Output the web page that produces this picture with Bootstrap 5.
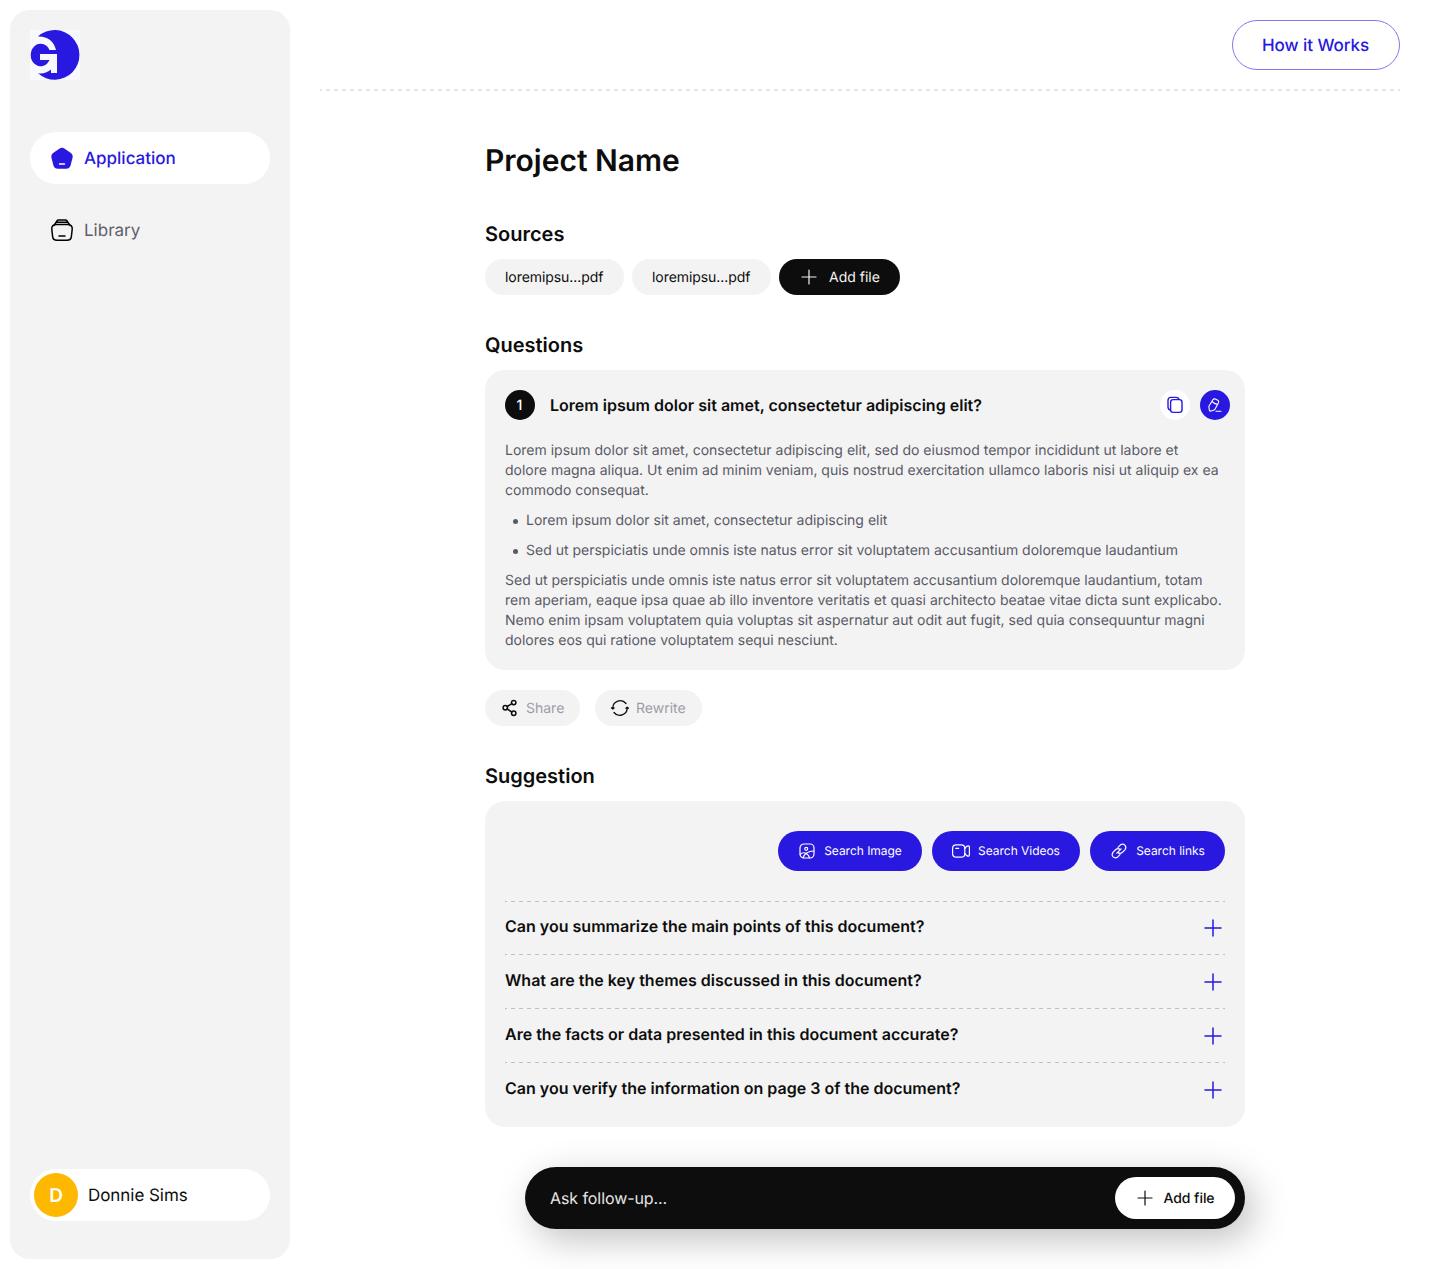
<!DOCTYPE html>
<html lang="en">
<head>
<meta charset="utf-8">
<meta name="viewport" content="width=device-width, initial-scale=1">
<title>Project Name</title>
<link href="https://cdn.jsdelivr.net/npm/bootstrap@5.3.0/dist/css/bootstrap.min.css" rel="stylesheet">
<style>
:root{--brand:#2818e0;--ink:#0d0d0d;--soft:#f3f3f3}
body{font-family:Inter,sans-serif;color:var(--ink);background:#fff;font-size:14px;line-height:20px;text-rendering:geometricPrecision}
svg{display:block;flex:none;fill:none;stroke:currentColor;stroke-linecap:round;stroke-linejoin:round}
svg.solid{stroke:none}
button{text-rendering:geometricPrecision}
.app-shell{height:1269px;padding:10px;overflow:hidden}
.side{width:280px;height:1249px;background:var(--soft);border-radius:20px;padding:20px 20px 38px}
.side-link{height:52px;border-radius:26px;padding-left:20px;gap:10px;font-size:17px;color:#5f5f6b;text-decoration:none}
.side-link span,.user-pill span+span{padding-top:2px}
.side-link.active{background:#fff;color:var(--brand);font-weight:500}
.side-nav{gap:20px;margin-top:52px}
.user-pill{height:52px;border-radius:26px;padding-left:4px;gap:10px;font-size:17px;letter-spacing:-.05px}
.avatar{width:44px;height:44px;padding-top:1px;background:#ffb800;color:#fff;font-size:19px;font-weight:600}
.main-col{padding:10px 30px 0 30px}
.how-btn{width:168px;height:50px;border:1px solid #8278ee;border-radius:25px;color:var(--brand);font-size:17px;font-weight:500;padding:3px 1px 0 0;letter-spacing:-.05px}
.how-btn:hover{background:var(--brand);color:#fff}
.top-rule{height:2px;margin-top:19px;background:linear-gradient(90deg,#e4e4e4 50%,transparent 50%) -2px 0/8px 2px repeat-x}
.content{width:760px;margin:0 auto 0 165px}
h1{font-size:30px;line-height:40px;font-weight:600;margin:50px 0 0}
h2{font-size:20px;line-height:24px;font-weight:600;margin:0}
.block-gap{margin-top:38px}
.chip{height:36px;border-radius:18px;background:var(--soft);border:0;padding:0 20px;font-size:14px;line-height:20px;color:var(--ink)}
.chip:hover{background:#e8e8e8}
.chip span{padding-top:2px}
.chip-dark{background:var(--ink);color:#f4f4f4;width:121px;gap:10px}
.chip-muted{color:#9c9ca6;padding:0 15px;gap:6px}
.chip-muted svg{color:var(--ink)}
.chip-file{width:139px;padding-top:2px;padding-right:21px;letter-spacing:-.06px}
.panel{background:var(--soft);border-radius:20px;margin-top:13px}
.num{width:30px;height:30px;padding:2px 1px 0 0;background:var(--ink);color:#fff;font-weight:500}
.tool{width:30px;height:30px;border:0;padding:0;color:var(--brand)}
.tool-edit{margin-left:10px;background:var(--brand);color:#fff}
.q-title{font-size:16px;font-weight:600;margin-left:15px;letter-spacing:.015px}
.answer{color:#5a5a66;margin-top:21px;white-space:nowrap}
.answer p,.answer ul{margin-bottom:10px}
.answer ul{list-style:none;padding:0 0 0 8px}
.answer li{display:flex;align-items:center;gap:8px}
.answer li::before{content:"";width:5px;height:5px;border-radius:50%;background:currentColor}
.answer li+li{margin-top:10px}
.search-btn{height:40px;border-radius:20px;background:var(--brand);color:#fff;font-size:12px;letter-spacing:-.03px;border:0;padding:0;gap:8px}
.search-btn:hover{background:#1d10b8;color:#fff}
.ask-row{height:54px;padding-top:2px;font-size:16px;font-weight:600;letter-spacing:.01px;background:linear-gradient(90deg,#bfbfbf 50%,transparent 50%) -2px 0/8px 1px repeat-x}
.ask-row:first-child{height:53px;padding-top:1px}
.ask-row span{padding-bottom:4px}
.ask-row svg{color:var(--brand)}
.follow{width:720px;height:62px;border-radius:31px;background:var(--ink);color:#e6e6e6;margin:40px 0 0 40px;padding:0 10px 0 25px;font-size:16px;letter-spacing:-.08px;box-shadow:8px 10px 36px rgba(0,0,0,.25)}
.follow .btn{width:120px;height:42px;border-radius:21px;font-size:14px;font-weight:500;padding:0;gap:8px;color:var(--ink);letter-spacing:-.05px}
</style>
</head>
<body>
<div class="app-shell d-flex">
  <aside class="side d-flex flex-column flex-shrink-0">
    <svg class="solid" width="50" height="50" viewBox="0 0 50 50"><path d="M0 0h50v50H0z" fill="#f8f8ff"/><path d="M8 6.500A24.800 24.800 0 1 1 8 43.300C13 44.500 18 42 21 39.500V43h6V24H10v6h9.500A9.900 11.300 0 1 1 19.500 20H26C24 11 17 6 8 6.500Z" fill="#2818e0"/></svg>
    <nav class="side-nav d-flex flex-column">
      <a href="#" class="side-link active d-flex align-items-center"><svg class="solid" width="24" height="24" viewBox="0 0 24 24"><path d="M9.300 2.700Q12 1 14.700 2.700L20.900 6.900Q23.300 8.800 22.500 12L20.600 19.200Q19.600 22.700 16 22.700H8Q4.400 22.700 3.400 19.200L1.500 12Q.7 8.800 3.100 6.900Z" fill="currentColor"/><path d="M9.500 18h5" stroke="#fff" stroke-width="1.500"/></svg><span>Application</span></a>
      <a href="#" class="side-link d-flex align-items-center"><svg class="text-black" width="24" height="24" viewBox="0 0 24 24" stroke-width="1.500"><path d="M6.500 6.500h11c3.500 0 5 1.600 4.700 4.800l-.8 7c-.3 2.700-1.600 4-4.400 4H7c-2.800 0-4.100-1.300-4.400-4l-.8-7C1.500 8.100 3 6.500 6.500 6.500ZM4 7.500 7 2.800Q7.600 2 8.500 2h7Q16.400 2 17 2.800l3 4.700M6 4.300h12M9 18h6"/></svg><span>Library</span></a>
    </nav>
    <div class="user-pill bg-white d-flex align-items-center mt-auto"><span class="avatar rounded-circle d-flex align-items-center justify-content-center">D</span><span>Donnie Sims</span></div>
  </aside>

  <main class="main-col flex-grow-1">
    <header>
      <div class="d-flex justify-content-end"><button class="btn how-btn">How it Works</button></div>
      <div class="top-rule"></div>
    </header>
    <div class="content">
      <h1>Project Name</h1>

      <section style="margin-top:41px">
        <h2>Sources</h2>
        <div class="d-flex gap-2" style="margin-top:13px">
          <button class="btn chip chip-file">loremipsu...pdf</button>
          <button class="btn chip chip-file">loremipsu...pdf</button>
          <button class="btn chip chip-dark d-flex align-items-center text-nowrap"><svg width="20" height="20" viewBox="0 0 20 20" stroke-width="1.200"><path d="M3 10h14M10 3v14"/></svg><span>Add file</span></button>
        </div>
      </section>

      <section class="block-gap">
        <h2>Questions</h2>
        <div class="panel" style="height:300px;padding:20px 15px 20px 20px">
          <div class="d-flex align-items-center">
            <span class="num rounded-circle d-flex align-items-center justify-content-center">1</span>
            <span class="q-title flex-grow-1">Lorem ipsum dolor sit amet, consectetur adipiscing elit?</span>
            <button class="btn tool bg-white rounded-circle d-flex align-items-center justify-content-center" aria-label="Copy"><svg width="18" height="18" viewBox="0 0 18 18" stroke-width="1.400"><rect x="4.600" y="3.600" width="11.400" height="12.800" rx="2.600"/><path d="M4.300 14C2.700 13.600 2 12.500 2 11V4.300Q2 1.400 4.900 1.400H10Q12.500 1.400 13.200 3.400"/></svg></button>
            <button class="btn tool tool-edit rounded-circle d-flex align-items-center justify-content-center" aria-label="Edit"><svg width="16" height="16" viewBox="0 0 16 16" stroke-width="1.100"><path d="M5.700 3Q6.700 1.400 8.300 2L10.800 3.300Q12.300 4.100 11.500 5.700L8.100 12Q7.600 12.900 6.600 13.200L4 14Q2.700 14.400 2.400 13.100L1.900 10.500Q1.700 9.600 2.200 8.700ZM5 4.400Q7 6.900 10.400 7.400M9 14.300h5"/></svg></button>
          </div>
          <div class="answer">
            <p>Lorem ipsum dolor sit amet, consectetur adipiscing elit, sed do eiusmod tempor incididunt ut labore et<br>dolore magna aliqua. Ut enim ad minim veniam, quis nostrud exercitation ullamco laboris nisi ut aliquip ex ea<br>commodo consequat.</p>
            <ul><li>Lorem ipsum dolor sit amet, consectetur adipiscing elit</li><li>Sed ut perspiciatis unde omnis iste natus error sit voluptatem accusantium doloremque laudantium</li></ul>
            <p class="mb-0">Sed ut perspiciatis unde omnis iste natus error sit voluptatem accusantium doloremque laudantium, totam<br>rem aperiam, eaque ipsa quae ab illo inventore veritatis et quasi architecto beatae vitae dicta sunt explicabo.<br>Nemo enim ipsam voluptatem quia voluptas sit aspernatur aut odit aut fugit, sed quia consequuntur magni<br>dolores eos qui ratione voluptatem sequi nesciunt.</p>
          </div>
        </div>
        <div class="d-flex" style="gap:15px;margin-top:20px">
          <button class="btn chip chip-muted d-flex align-items-center" style="width:95px"><svg width="20" height="20" viewBox="0 0 20 20" stroke-width="1.500"><circle cx="5.300" cy="9.700" r="2.200"/><circle cx="13.700" cy="4.600" r="2.200"/><circle cx="13.700" cy="15.300" r="2.200"/><path d="m7.200 8.500 4.600-2.800M7.100 10.900l4.800 3.200"/></svg><span>Share</span></button>
          <button class="btn chip chip-muted d-flex align-items-center" style="width:107px"><svg width="20" height="20" viewBox="0 0 20 20" stroke-width="1.300"><path d="M2.800 10A7.400 7.400 0 0 1 16 5.500M17.200 10A7.400 7.400 0 0 1 4 14.500"/><path d="m1.500 10 1.300 1 1.300-1ZM15.900 10.200 17.200 9.200l1.300 1Z" fill="currentColor"/></svg><span>Rewrite</span></button>
        </div>
      </section>

      <section class="block-gap">
        <h2>Suggestion</h2>
        <div class="panel" style="height:326px;padding:30px 20px 0">
          <div class="d-flex justify-content-end" style="gap:10px;margin-bottom:30px">
            <button class="btn search-btn d-flex align-items-center justify-content-center" style="width:144px"><svg width="18" height="18" viewBox="0 0 18 18" stroke-width="1.200"><rect x="2" y="2" width="14" height="14" rx="4"/><circle cx="8.200" cy="6.800" r="1.500"/><path d="M2.200 12.300Q5 9.800 7.800 11.300 11 13 11.300 15.800M5 15.800Q7.300 9.200 15.800 9"/></svg><span>Search Image</span></button>
            <button class="btn search-btn d-flex align-items-center justify-content-center" style="width:148px"><svg width="18" height="18" viewBox="0 0 18 18" stroke-width="1.200"><rect x=".6" y="2.800" width="12.200" height="12.400" rx="3.500"/><path d="M12.800 6.500 14.600 4.400Q17.400 2.900 17.400 5.500v7Q17.400 15.100 14.600 13.600L12.800 11.500M3.700 6.300h3"/></svg><span>Search Videos</span></button>
            <button class="btn search-btn d-flex align-items-center justify-content-center" style="width:135px"><svg width="18" height="18" viewBox="0 0 18 18" stroke-width="1.200"><path d="M8 5.300 10.200 3.100Q12.700 1.200 14.900 3.100 16.800 5.300 14.900 7.800L12.200 10.500Q10.300 12 8.300 10.900M10 12.700 7.800 14.900Q5.300 16.800 3.100 14.900 1.200 12.700 3.100 10.200L5.800 7.500Q7.700 6 9.700 7.100M6.800 11.200l4.400-4.400"/></svg><span>Search links</span></button>
          </div>
          <div>
            <div class="ask-row d-flex justify-content-between align-items-center"><span>Can you summarize the main points of this document?</span><svg width="24" height="24" viewBox="0 0 24 24" stroke-width="1.500"><path d="M4 12h16M12 4v16"/></svg></div>
            <div class="ask-row d-flex justify-content-between align-items-center"><span>What are the key themes discussed in this document?</span><svg width="24" height="24" viewBox="0 0 24 24" stroke-width="1.500"><path d="M4 12h16M12 4v16"/></svg></div>
            <div class="ask-row d-flex justify-content-between align-items-center"><span>Are the facts or data presented in this document accurate?</span><svg width="24" height="24" viewBox="0 0 24 24" stroke-width="1.500"><path d="M4 12h16M12 4v16"/></svg></div>
            <div class="ask-row d-flex justify-content-between align-items-center"><span>Can you verify the information on page 3 of the document?</span><svg width="24" height="24" viewBox="0 0 24 24" stroke-width="1.500"><path d="M4 12h16M12 4v16"/></svg></div>
          </div>
        </div>
      </section>

      <div class="follow d-flex align-items-center justify-content-between"><span>Ask follow-up...</span><button class="btn bg-white d-flex align-items-center justify-content-center"><svg width="20" height="20" viewBox="0 0 20 20" stroke-width="1.200"><path d="M3 10h14M10 3v14"/></svg><span>Add file</span></button></div>
    </div>
  </main>
</div>
<script src="https://cdn.jsdelivr.net/npm/bootstrap@5.3.0/dist/js/bootstrap.bundle.min.js"></script>
</body>
</html>
